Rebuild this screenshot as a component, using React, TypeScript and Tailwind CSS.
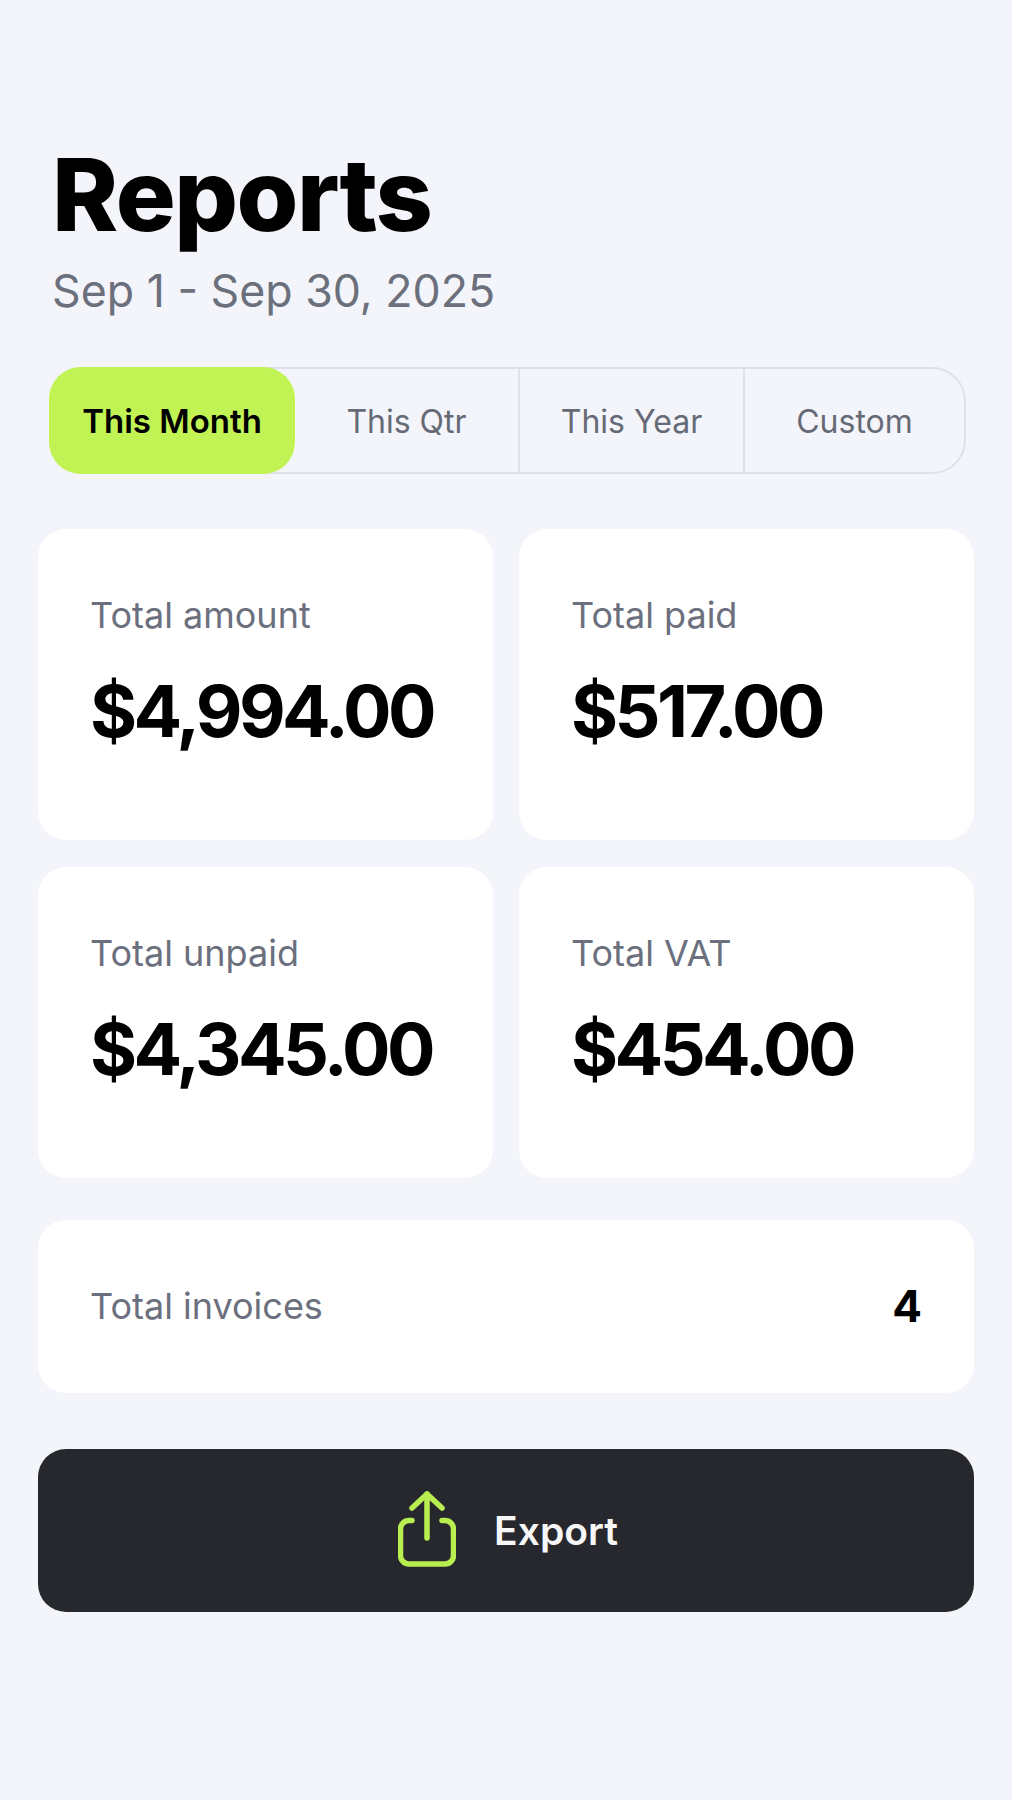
const FONT = "font-['Inter','Liberation_Sans',sans-serif]";

const tabs = [
  { label: "This Month", width: "w-[246px]", active: true },
  { label: "This Qtr", width: "w-[223px]", active: false },
  { label: "This Year", width: "w-[225px]", active: false },
  { label: "Custom", width: "flex-1", active: false },
];

const stats = [
  { label: "Total amount", value: "$4,994.00" },
  { label: "Total paid", value: "$517.00" },
  { label: "Total unpaid", value: "$4,345.00" },
  { label: "Total VAT", value: "$454.00" },
];

function ExportIcon() {
  return (
    <svg className="-mt-[3px]" width="58" height="76" viewBox="0 0 58 76" fill="none" stroke="#b9ee50" strokeWidth="5.5" strokeLinecap="round" strokeLinejoin="round">
      <path d="M14 29.5H11a8.5 8.5 0 0 0-8.5 8.5v26.5a8.5 8.5 0 0 0 8.5 8.5h36a8.5 8.5 0 0 0 8.5-8.5V38a8.5 8.5 0 0 0-8.5-8.5h-3" />
      <path d="M29 47V3" />
      <path d="M14 17L29 3l15 14" />
    </svg>
  );
}

export default function App() {
  return (
    <div className={`${FONT} w-[1012px] h-[1800px] bg-[#f3f5fa] px-[38px] pt-[145px]`}>
      {/* Header */}
      <h1 className="pl-[14px] text-[100px] leading-[100px] font-extrabold tracking-[-0.015em] text-black">Reports</h1>
      <p className="pl-[14px] mt-[20px] text-[44.7px] leading-[52px] text-[#6c707c]">Sep 1 - Sep 30, 2025</p>

      {/* Period tabs */}
      <div className="ml-[11px] mt-[50px] flex w-[917px] h-[107px] rounded-[34px] border-2 border-[#dfe1e8] box-border">
        {tabs.map((tab, i) => (
          <div
            key={tab.label}
            className={`${tab.width} flex items-center justify-center pt-[2px] ${
              tab.active
                ? "-m-[2px] mr-0 rounded-[32px] bg-[#c2f354] text-[33px] font-semibold text-black"
                : "text-[32px] font-normal text-[#666a76]"
            } ${i > 1 ? "border-l-2 border-[#dfe1e8]" : ""}`}
          >
            {tab.label}
          </div>
        ))}
      </div>

      {/* Totals */}
      <div className="mt-[55px] grid grid-cols-2 gap-x-[26px] gap-y-[27px]">
        {stats.map((stat) => (
          <div key={stat.label} className="h-[311px] rounded-[28px] bg-white pl-[52px] pt-[66px]">
            <div className="text-[36px] leading-[40px] text-[#6c6f7d]">{stat.label}</div>
            <div className="mt-[36px] text-[72px] leading-[80px] font-[750] tracking-[-0.05em] text-black">{stat.value}</div>
          </div>
        ))}
      </div>

      <div className="mt-[42px] flex h-[173px] items-center justify-between rounded-[28px] bg-white pl-[52px] pr-[52px] pb-[2px]">
        <span className="text-[36px] leading-[40px] text-[#6c6f7d]">Total invoices</span>
        <span className="text-[44px] leading-[52px] font-bold text-black">4</span>
      </div>

      <button className="mt-[56px] flex h-[163px] w-full items-center justify-center gap-[38px] rounded-[28px] bg-[#27282d] pl-[4px]">
        <ExportIcon />
        <span className="text-[39px] leading-[46px] font-semibold text-[#f7f7f7]">Export</span>
      </button>
    </div>
  );
}
